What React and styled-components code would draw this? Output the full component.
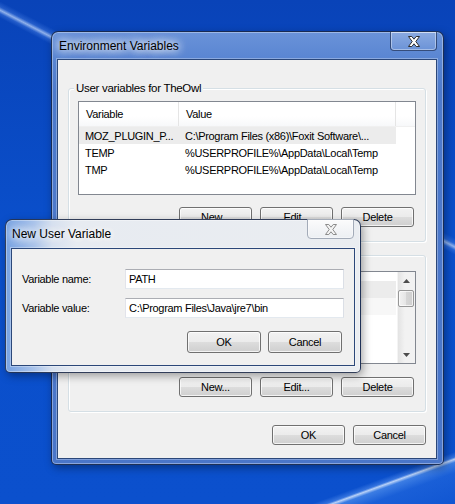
import styled, { createGlobalStyle } from "styled-components";

const GlobalStyle = createGlobalStyle`
  html, body {
    margin: 0;
    padding: 0;
  }
  body {
    font-family: "Liberation Sans", Arial, sans-serif;
  }
`;

const Desktop = styled.div`
  position: relative;
  width: 455px;
  height: 504px;
  overflow: hidden;
  background:
    linear-gradient(27.5deg, transparent 431px, rgba(120, 170, 255, 0.25) 435px, rgba(200, 222, 255, 0.7) 438px, rgba(120, 170, 255, 0.25) 441px, transparent 446px),
    linear-gradient(160deg, transparent 580px, rgba(130, 180, 255, 0.35) 585px, rgba(215, 232, 255, 0.85) 587px, rgba(120, 180, 255, 0.45) 590px, rgba(60, 130, 240, 0.3) 600px, rgba(40, 110, 230, 0.2) 629px),
    linear-gradient(180deg, #0943b8 0%, #0a4fcb 45%, #0b50cd 100%);
`;

const Window = styled.div`
  position: absolute;
  left: ${(p) => p.$x}px;
  top: ${(p) => p.$y}px;
  width: ${(p) => p.$w}px;
  height: ${(p) => p.$h}px;
  box-sizing: border-box;
  display: flex;
  flex-direction: column;
  border: 1px solid rgba(16, 30, 62, 0.85);
  border-radius: 7px 7px 5px 5px;
  background: ${(p) =>
    p.$glass === "light"
      ? "linear-gradient(90deg, #77a2e2 0px, #a9c3ea 28px, #d6e0ef 46px, #e7ebf1 70px, #eaedf1 100%)"
      : "linear-gradient(180deg, #6a93d9 0px, #5a86d2 26px, #4d7acc 60px, #4a76c9 100%)"};
  box-shadow: inset 0 0 0 1px rgba(255, 255, 255, 0.35),
    2px 3px 9px rgba(0, 0, 0, 0.35);
`;

const TitleBar = styled.div`
  position: relative;
  height: ${(p) => p.$h}px;
  flex: none;
  display: flex;
  align-items: center;
  padding-left: ${(p) => p.$pad}px;
`;

const Title = styled.span`
  font-size: 12px;
  color: #000;
  text-shadow: 0 0 8px #fff, 0 0 8px #fff, 0 0 12px rgba(255, 255, 255, 0.9);
`;

const CloseButton = styled.div`
  position: absolute;
  top: -1px;
  right: 6px;
  width: 47px;
  height: 20px;
  box-sizing: border-box;
  display: flex;
  align-items: center;
  justify-content: center;
  border-radius: 0 0 4px 4px;
  border: 1px solid
    ${(p) => (p.$dim ? "#a3abb8" : "rgba(28, 48, 90, 0.75)")};
  background: ${(p) =>
    p.$dim
      ? "linear-gradient(#fbfbfc, #eceff3)"
      : "linear-gradient(rgba(255,255,255,0.22), rgba(255,255,255,0.08))"};
  box-shadow: inset 0 0 0 1px rgba(255, 255, 255, 0.4);
`;

const Client = styled.div`
  flex: 1;
  margin: ${(p) => p.$m};
  box-sizing: border-box;
  border: 1px solid #2b4779;
  background: #f0f0f0;
  box-shadow: 0 0 0 1px rgba(255, 255, 255, 0.3);
  font-size: 11px;
  letter-spacing: -0.3px;
  color: #000;
  display: flex;
  flex-direction: column;
  padding: ${(p) => p.$pad};
`;

const Group = styled.div`
  position: relative;
  margin-top: ${(p) => p.$mt || 0}px;
  border: 1px solid #d5dfe5;
  border-radius: 3px;
  box-shadow: inset 1px 1px 0 #fff, 1px 1px 0 #fff;
  padding: ${(p) => p.$pt}px 9px 14px 9px;
  display: flex;
  flex-direction: column;
`;

const GroupLabel = styled.span`
  position: absolute;
  top: -7px;
  left: 5px;
  padding: 0 2px;
  background: #f0f0f0;
  line-height: 13px;
  font-size: 11.5px;
`;

const ListView = styled.div`
  height: ${(p) => p.$h}px;
  box-sizing: border-box;
  border: 1px solid #828790;
  background: #fff;
  display: flex;
  overflow: hidden;
`;

const ListBody = styled.div`
  flex: 1;
  padding-top: ${(p) => p.$pt || 0}px;
`;

const Header = styled.div`
  display: flex;
  height: 24px;
  border-bottom: 1px solid #f0f0f0;
`;

const HeaderCell = styled.div`
  width: ${(p) => (p.$w ? `${p.$w}px` : "auto")};
  flex: ${(p) => (p.$w ? "none" : 1)};
  box-sizing: border-box;
  padding-left: 7px;
  line-height: 24px;
  border-right: ${(p) => (p.$last ? "none" : "1px solid #e5e5e5")};
  background: linear-gradient(#fff, #fff 60%, #f7f8fa);
`;

const Row = styled.div`
  display: flex;
  align-items: center;
  width: 317px;
  height: 17px;
  background: ${(p) => p.$bg || "transparent"};
`;

const Cell = styled.div`
  width: ${(p) => (p.$w ? `${p.$w}px` : "auto")};
  flex: ${(p) => (p.$w ? "none" : 1)};
  padding-left: 6px;
  box-sizing: border-box;
  white-space: nowrap;
  overflow: hidden;
`;

const Scrollbar = styled.div`
  width: 17px;
  flex: none;
  display: flex;
  flex-direction: column;
  background: linear-gradient(90deg, #e3e3e3, #f2f2f2 40%, #f2f2f2);
  border-left: 1px solid #f4f4f4;
`;

const ScrollArrow = styled.div`
  height: 17px;
  display: flex;
  align-items: center;
  justify-content: center;
  margin-top: ${(p) => (p.$down ? "auto" : 0)};
`;

const Thumb = styled.div`
  height: 15px;
  margin: 1px 1px 0 0;
  border: 1px solid #979797;
  border-radius: 2px;
  background: linear-gradient(90deg, #f2f2f2, #e5e5e5 50%, #d6d6d6 51%, #cfcfcf);
  box-shadow: inset 0 0 0 1px rgba(255, 255, 255, 0.7);
`;

const ButtonRow = styled.div`
  display: flex;
  justify-content: flex-end;
  gap: ${(p) => p.$gap || 8}px;
  margin-top: ${(p) => p.$mt}px;
  padding-right: ${(p) => p.$pr || 0}px;
`;

const Button = styled.button`
  width: ${(p) => p.$w || 73}px;
  height: ${(p) => p.$h || 20}px;
  padding: 0;
  border: 1px solid #707070;
  border-radius: 3px;
  background: linear-gradient(#f2f2f2 0%, #ebebeb 50%, #dddddd 50%, #cfcfcf 100%);
  box-shadow: inset 0 0 0 1px rgba(255, 255, 255, 0.75);
  font-family: "Liberation Sans", Arial, sans-serif;
  font-size: 11px;
  letter-spacing: -0.3px;
  color: #000;
`;

const FieldRow = styled.div`
  display: flex;
  align-items: center;
  margin-top: ${(p) => p.$mt || 0}px;
  padding-right: 10px;
`;

const FieldLabel = styled.label`
  width: 103px;
  flex: none;
`;

const TextBox = styled.div`
  flex: 1;
  height: 20px;
  box-sizing: border-box;
  border: 1px solid #e3e9ef;
  border-top-color: #abadb3;
  border-left-color: #e2e3ea;
  border-right-color: #dbdfe6;
  background: #fff;
  padding-left: 3px;
  line-height: 18px;
`;

const CloseX = ({ dim }) => (
  <svg width="14" height="11" viewBox="0 0 14 11">
    <path
      d="M1.5 0.5H4.8L7 3.2L9.2 0.5H12.5L8.8 5.5L12.5 10.5H9.2L7 7.8L4.8 10.5H1.5L5.2 5.5Z"
      fill={dim ? "#f4f4f4" : "#fff"}
      stroke={dim ? "#8c8c8c" : "#2d2d2d"}
      strokeWidth="1"
      strokeLinejoin="round"
    />
  </svg>
);

const Arrow = ({ down }) => (
  <svg width="7" height="4" viewBox="0 0 7 4">
    <path d={down ? "M0 0H7L3.5 4Z" : "M0 4H7L3.5 0Z"} fill="#4d4d4d" />
  </svg>
);

const userVars = [
  ["MOZ_PLUGIN_P...", "C:\\Program Files (x86)\\Foxit Software\\..."],
  ["TEMP", "%USERPROFILE%\\AppData\\Local\\Temp"],
  ["TMP", "%USERPROFILE%\\AppData\\Local\\Temp"],
];

// system rows sit under the dialog; only their highlight shows
const systemRows = ["#ececec", "#f7f7f7", null, null];

const App = () => {
  return (
    <Desktop>
      <GlobalStyle />
      <Window $x={51} $y={31} $w={393} $h={434}>
        <TitleBar $h={27} $pad={7}>
          <Title>Environment Variables</Title>
          <CloseButton>
            <CloseX />
          </CloseButton>
        </TitleBar>
        <Client $m="0 6px 5px 5px" $pad="28px 10px 0 10px">
          <Group $pt={12}>
            <GroupLabel>User variables for TheOwl</GroupLabel>
            <ListView $h={94}>
              <ListBody>
                <Header>
                  <HeaderCell $w={100}>Variable</HeaderCell>
                  <HeaderCell $w={217}>Value</HeaderCell>
                  <HeaderCell $last />
                </Header>
                {userVars.map(([name, value], i) => (
                  <Row key={name} $bg={i === 0 ? "#ececec" : null}>
                    <Cell $w={100}>{name}</Cell>
                    <Cell>{value}</Cell>
                  </Row>
                ))}
              </ListBody>
            </ListView>
            <ButtonRow $mt={12} $pr={2}>
              <Button>New...</Button>
              <Button>Edit...</Button>
              <Button>Delete</Button>
            </ButtonRow>
          </Group>
          <Group $mt={13} $pt={15}>
            <ListView $h={93}>
              <ListBody $pt={9}>
                {systemRows.map((bg, i) => (
                  <Row key={i} $bg={bg} />
                ))}
              </ListBody>
              <Scrollbar>
                <ScrollArrow>
                  <Arrow />
                </ScrollArrow>
                <Thumb />
                <ScrollArrow $down>
                  <Arrow down />
                </ScrollArrow>
              </Scrollbar>
            </ListView>
            <ButtonRow $mt={13} $pr={2}>
              <Button>New...</Button>
              <Button>Edit...</Button>
              <Button>Delete</Button>
            </ButtonRow>
          </Group>
          <ButtonRow $mt={13} $gap={8}>
            <Button>OK</Button>
            <Button>Cancel</Button>
          </ButtonRow>
        </Client>
      </Window>

      <Window $x={5} $y={219} $w={356} $h={154} $glass="light">
        <TitleBar $h={28} $pad={6}>
          <Title>New User Variable</Title>
          <CloseButton $dim>
            <CloseX dim />
          </CloseButton>
        </TitleBar>
        <Client $m="0 5px 6px 5px" $pad="20px 0 0 10px">
          <FieldRow>
            <FieldLabel>Variable name:</FieldLabel>
            <TextBox>PATH</TextBox>
          </FieldRow>
          <FieldRow $mt={9}>
            <FieldLabel>Variable value:</FieldLabel>
            <TextBox>C:\Program Files\Java\jre7\bin</TextBox>
          </FieldRow>
          <ButtonRow $mt={13} $gap={7} $pr={12}>
            <Button $w={74} $h={22}>OK</Button>
            <Button $w={74} $h={22}>Cancel</Button>
          </ButtonRow>
        </Client>
      </Window>
    </Desktop>
  );
};

export default App;
